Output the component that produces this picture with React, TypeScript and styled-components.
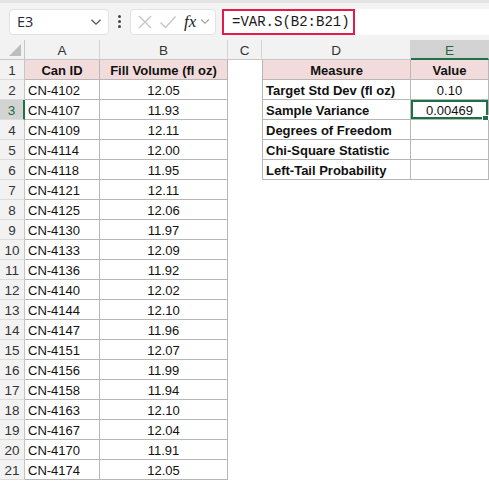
import styled, { createGlobalStyle } from "styled-components";

const GlobalStyle = createGlobalStyle`
  html, body {
    margin: 0;
    padding: 0;
    background: #ffffff;
  }
  body {
    font-family: "Liberation Sans", Arial, sans-serif;
    overflow: hidden;
  }
`;

const Page = styled.div`
  width: 489px;
  height: 482px;
  overflow: hidden;
  background: #ffffff;
`;

const Toolbar = styled.div`
  height: 40px;
  box-sizing: border-box;
  background: #f3f3f3;
  border-top: 3px solid #e4e4e4;
  display: flex;
  align-items: center;
  padding: 0 0 0 9px;
`;

const NameBox = styled.div`
  width: 100px;
  height: 26px;
  box-sizing: border-box;
  background: #ffffff;
  border: 1px solid #e2e2e2;
  border-radius: 4px;
  display: flex;
  align-items: center;
  justify-content: space-between;
  padding: 0 6px 0 7px;
  font-family: "Open Sans", sans-serif;
  font-size: 14.5px;
  color: #1f2a3a;
`;

const Dots = styled.div`
  width: 21px;
  display: flex;
  flex-direction: column;
  align-items: center;
  gap: 2px;

  > span {
    width: 3px;
    height: 3px;
    border-radius: 50%;
    background: #444;
  }
`;

const ButtonGroup = styled.div`
  width: 86px;
  height: 26px;
  box-sizing: border-box;
  background: #ffffff;
  border: 1px solid #e2e2e2;
  border-radius: 4px;
  display: flex;
  align-items: center;
  padding: 0 4px 0 6px;
  gap: 6px;
`;

const Fx = styled.span`
  font-family: "Liberation Serif", serif;
  font-style: italic;
  font-size: 17px;
  color: #222;
  margin-left: 1px;
  margin-right: -2px;
`;

const FormulaArea = styled.div`
  flex: 1;
  height: 26px;
  margin-left: 6px;
  background: #ffffff;
  display: flex;
  align-items: center;
`;

const Highlight = styled.div`
  height: 26px;
  width: 133px;
  box-sizing: border-box;
  border: 2px solid #e5194a;
  display: flex;
  align-items: center;
  padding-left: 8px;
  font-family: "Liberation Mono", monospace;
  font-size: 14px;
  color: #1a1a1a;
`;

const Sheet = styled.div`
  display: grid;
  grid-template-columns: 25px 75px 128px 34px 149px 78px;
  grid-auto-rows: 20px;
`;

const Corner = styled.div`
  background: #f2f2f2;
  border-right: 1px solid #c6c6c6;
  border-bottom: 1px solid #c6c6c6;
  box-sizing: border-box;
  display: flex;
  align-items: flex-end;
  justify-content: flex-end;
  padding: 0 3px 3px 0;
`;

const ColHeader = styled.div<{ $active?: boolean }>`
  box-sizing: border-box;
  background: ${(p) => (p.$active ? "#d3d3d3" : "#f2f2f2")};
  border-right: 1px solid #d4d4d4;
  border-bottom: ${(p) => (p.$active ? "2px solid #1e7145" : "1px solid #c6c6c6")};
  display: flex;
  align-items: center;
  justify-content: center;
  padding-top: 2px;
  font-size: 13.5px;
  color: ${(p) => (p.$active ? "#1e6b42" : "#333")};
`;

const RowHeader = styled.div<{ $active?: boolean }>`
  box-sizing: border-box;
  background: ${(p) => (p.$active ? "#d3d3d3" : "#f2f2f2")};
  border-right: ${(p) => (p.$active ? "2px solid #1e7145" : "1px solid #c6c6c6")};
  border-bottom: 1px solid #dcdcdc;
  display: flex;
  align-items: center;
  justify-content: center;
  padding-top: 2px;
  font-size: 13.5px;
  color: ${(p) => (p.$active ? "#1e6b42" : "#333")};
`;

const Cell = styled.div<{
  $lined?: boolean;
  $leftLine?: boolean;
  $head?: boolean;
  $align?: "left" | "center";
  $selected?: boolean;
}>`
  position: relative;
  box-sizing: border-box;
  background: ${(p) => (p.$head ? "#f2dcdb" : "#ffffff")};
  border-right: ${(p) => (p.$lined ? "1px solid #b7b7b7" : "none")};
  border-bottom: ${(p) => (p.$lined ? "1px solid #b7b7b7" : "none")};
  border-left: ${(p) => (p.$leftLine ? "1px solid #b7b7b7" : "none")};
  display: flex;
  align-items: center;
  justify-content: ${(p) => (p.$align === "center" ? "center" : "flex-start")};
  padding: 2px 3px 0;
  font-size: 13px;
  font-weight: ${(p) => (p.$head ? 700 : 400)};
  color: #111;
  white-space: nowrap;
  ${(p) =>
    p.$selected &&
    `
    box-shadow: inset 0 0 0 2px #1e7145;
    &::after {
      content: "";
      position: absolute;
      right: -1px;
      bottom: -3px;
      width: 5px;
      height: 5px;
      background: #1e7145;
      border: 1px solid #fff;
    }
  `}
`;

const Chevron = () => (
  <svg width="12" height="8" viewBox="0 0 12 8">
    <path d="M1.5 1.8 L6 6.2 L10.5 1.8" fill="none" stroke="#555" strokeWidth="1.3" />
  </svg>
);

const SmallChevron = () => (
  <svg width="10" height="7" viewBox="0 0 10 7">
    <path d="M1.2 1.5 L5 5.3 L8.8 1.5" fill="none" stroke="#9a9a9a" strokeWidth="1.1" />
  </svg>
);

const CancelIcon = () => (
  <svg width="16" height="16" viewBox="0 0 16 16">
    <path d="M2 2 L14 14 M14 2 L2 14" stroke="#c4c4c4" strokeWidth="1.3" />
  </svg>
);

const CheckIcon = () => (
  <svg width="18" height="16" viewBox="0 0 18 16">
    <path d="M1.5 8.5 L6.5 13.5 L16.5 2.5" fill="none" stroke="#c4c4c4" strokeWidth="1.3" />
  </svg>
);

const SelectAll = () => (
  <svg width="12" height="12" viewBox="0 0 12 12">
    <path d="M12 0 L12 12 L0 12 Z" fill="#bdbdbd" />
  </svg>
);

const cans: [string, string][] = [
  ["CN-4102", "12.05"],
  ["CN-4107", "11.93"],
  ["CN-4109", "12.11"],
  ["CN-4114", "12.00"],
  ["CN-4118", "11.95"],
  ["CN-4121", "12.11"],
  ["CN-4125", "12.06"],
  ["CN-4130", "11.97"],
  ["CN-4133", "12.09"],
  ["CN-4136", "11.92"],
  ["CN-4140", "12.02"],
  ["CN-4144", "12.10"],
  ["CN-4147", "11.96"],
  ["CN-4151", "12.07"],
  ["CN-4156", "11.99"],
  ["CN-4158", "11.94"],
  ["CN-4163", "12.10"],
  ["CN-4167", "12.04"],
  ["CN-4170", "11.91"],
  ["CN-4174", "12.05"],
];

const measures: [string, string][] = [
  ["Target Std Dev (fl oz)", "0.10"],
  ["Sample Variance", "0.00469"],
  ["Degrees of Freedom", ""],
  ["Chi-Square Statistic", ""],
  ["Left-Tail Probability", ""],
];

const App = () => {
  const rows = [];
  for (let r = 1; r <= 21; r++) {
    const isHead = r === 1;
    const can = cans[r - 2];
    const m = measures[r - 2];
    const inRight = r <= 6;
    rows.push(
      <RowHeader key={`h${r}`} $active={r === 3}>
        {r}
      </RowHeader>,
      <Cell key={`a${r}`} $lined $head={isHead} $align={isHead ? "center" : "left"}>
        {isHead ? "Can ID" : can[0]}
      </Cell>,
      <Cell key={`b${r}`} $lined $head={isHead} $align="center">
        {isHead ? "Fill Volume (fl oz)" : can[1]}
      </Cell>,
      <Cell key={`c${r}`} />,
      <Cell key={`d${r}`} $lined={inRight} $leftLine={inRight} $head={isHead} $align={isHead ? "center" : "left"}>
        {isHead ? "Measure" : m ? <b>{m[0]}</b> : ""}
      </Cell>,
      <Cell key={`e${r}`} $lined={inRight} $head={isHead} $align="center" $selected={r === 3}>
        {isHead ? "Value" : m ? m[1] : ""}
      </Cell>
    );
  }

  return (
    <Page>
      <GlobalStyle />
      <Toolbar>
        <NameBox>
          <span>E3</span>
          <Chevron />
        </NameBox>
        <Dots>
          <span />
          <span />
          <span />
        </Dots>
        <ButtonGroup>
          <CancelIcon />
          <CheckIcon />
          <Fx>fx</Fx>
          <SmallChevron />
        </ButtonGroup>
        <FormulaArea>
          <Highlight>=VAR.S(B2:B21)</Highlight>
        </FormulaArea>
      </Toolbar>
      <Sheet>
        <Corner>
          <SelectAll />
        </Corner>
        <ColHeader>A</ColHeader>
        <ColHeader>B</ColHeader>
        <ColHeader>C</ColHeader>
        <ColHeader>D</ColHeader>
        <ColHeader $active>E</ColHeader>
        {rows}
      </Sheet>
    </Page>
  );
};

export default App;
